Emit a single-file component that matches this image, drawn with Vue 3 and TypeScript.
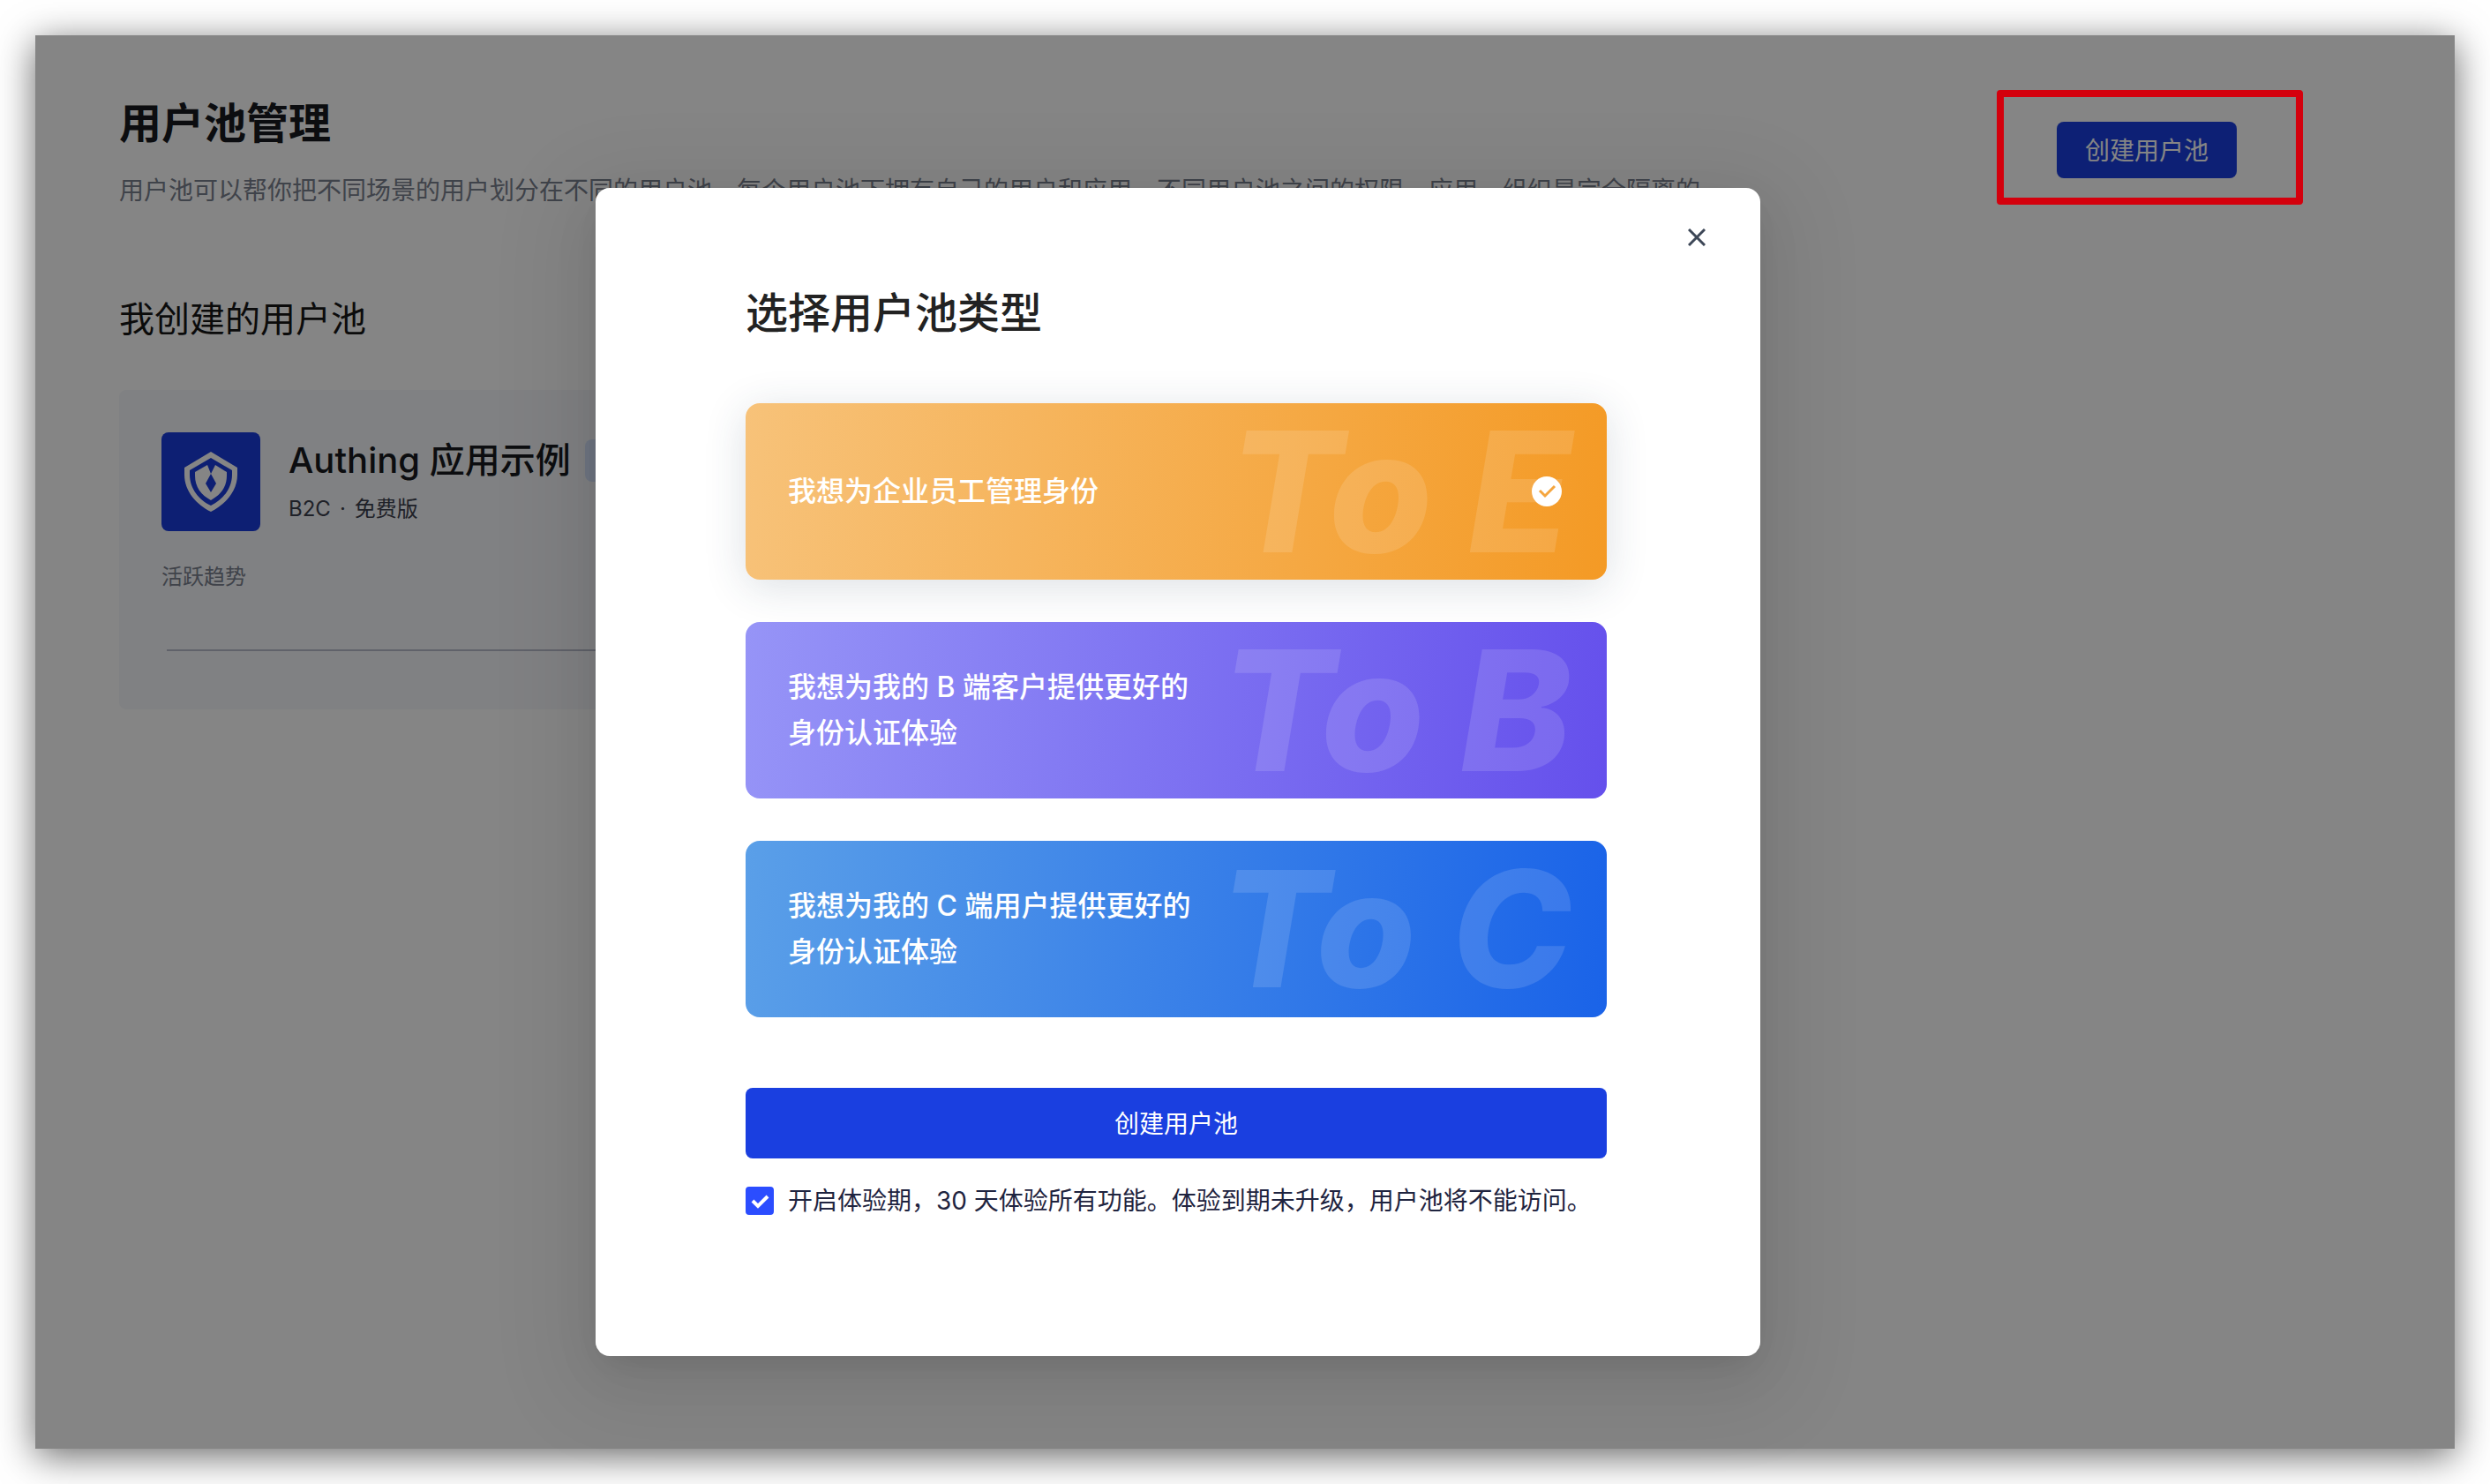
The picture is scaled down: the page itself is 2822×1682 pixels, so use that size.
<script setup lang="ts">
import { ref } from 'vue'

interface PoolType {
  id: string
  letter: string
  lines: string[]
}

const poolTypes: PoolType[] = [
  { id: 'e', letter: 'E', lines: ['我想为企业员工管理身份'] },
  { id: 'b', letter: 'B', lines: ['我想为我的 B 端客户提供更好的', '身份认证体验'] },
  { id: 'c', letter: 'C', lines: ['我想为我的 C 端用户提供更好的', '身份认证体验'] },
]

const selected = ref('e')
const trial = ref(true)
</script>

<template>
  <div class="page">
    <div class="frame">
      <main class="console">
        <header class="head">
          <div>
            <h1>用户池管理</h1>
            <p class="desc">用户池可以帮你把不同场景的用户划分在不同的用户池，每个用户池下拥有自己的用户和应用，不同用户池之间的权限、应用、组织是完全隔离的</p>
          </div>
          <button class="create" type="button">创建用户池</button>
        </header>
        <h2>我创建的用户池</h2>
        <article class="pool">
          <div class="pool-top">
            <div class="logo">
              <svg viewBox="0 0 60 68" width="60" height="68" aria-hidden="true">
                <path fill="#fff" fill-rule="evenodd" d="M30 0 60 18V26C60 45 46 60 30 68 14 60 0 45 0 26V18ZM30 7 6 21V26C6 42 17 55 30 61 43 55 54 42 54 26V21Z" />
                <path fill="#fff" d="M26 15 12 23V27C12 40 19 49 30 55 41 49 48 40 48 27V23L35 15 30 25 36 36 30 46 24 36 30 25Z" />
              </svg>
            </div>
            <div>
              <div class="pool-name"><h3>Authing 应用示例</h3><span class="tag">体验中</span></div>
              <p class="plan"><span>B2C</span><span>·</span><span>免费版</span></p>
            </div>
          </div>
          <p class="trend">活跃趋势</p>
          <div class="chart"></div>
        </article>
      </main>

      <div class="overlay">
        <section class="modal" role="dialog" aria-labelledby="modal-title">
          <button class="close" type="button" aria-label="关闭">
            <svg viewBox="0 0 20 20" width="20" height="20" aria-hidden="true">
              <path d="M1 1 19 19M19 1 1 19" stroke="#3d4757" stroke-width="3" fill="none" />
            </svg>
          </button>
          <h2 id="modal-title" class="modal-title">选择用户池类型</h2>
          <div class="types">
            <label v-for="t in poolTypes" :key="t.id" class="type" :class="[t.id, { active: selected === t.id }]">
              <input v-model="selected" class="radio" type="radio" name="pool" :value="t.id" />
              <span class="mark" aria-hidden="true"><span>To</span><span>{{ t.letter }}</span></span>
              <span class="type-body">
                <span class="type-text"><span v-for="l in t.lines" :key="l">{{ l }}</span></span>
                <svg v-if="selected === t.id" viewBox="0 0 40 40" width="40" height="40" aria-hidden="true">
                  <circle cx="20" cy="20" r="17" fill="#fff" />
                  <path d="M12 19 18 25 29 14" stroke="#f5a63f" stroke-width="3" fill="none" />
                </svg>
              </span>
            </label>
          </div>
          <button class="submit" type="button">创建用户池</button>
          <label class="trial">
            <span class="box">
              <input v-model="trial" type="checkbox" />
              <svg v-if="trial" viewBox="0 0 32 32" width="32" height="32" aria-hidden="true">
                <path d="M8 16 14 22 25 11" stroke="#fff" stroke-width="4" fill="none" />
              </svg>
            </span>
            <span>开启体验期，30 天体验所有功能。体验到期未升级，用户池将不能访问。</span>
          </label>
        </section>
      </div>
      <div class="highlight"></div>
    </div>
  </div>
</template>

<style>
body {
  margin: 0;
  background: #fff;
}
</style>

<style scoped>
* {
  box-sizing: border-box;
}

h1, h2, h3, p {
  margin: 0;
}

button {
  border: 0;
  padding: 0;
  font: inherit;
  cursor: pointer;
}

.page {
  display: flex;
  min-height: 100vh;
  padding: 40px;
  overflow: hidden;
  font-family: Inter, "Noto Sans CJK SC", sans-serif;
  font-size: 28px;
}

.frame {
  position: relative;
  display: grid;
  flex: 1;
  background: #fff;
  box-shadow: 0 8px 40px rgba(0, 0, 0, 0.6);
}

.console,
.overlay {
  grid-area: 1 / 1;
  padding: 64px 247px 64px 95px;
}

.head {
  display: flex;
  justify-content: space-between;
  align-items: flex-start;
}

h1 {
  font-size: 48px;
  line-height: 72px;
  font-weight: 700;
  color: #181a20;
}

.desc {
  margin-top: 18px;
  line-height: 44px;
  color: #7a808e;
}

.create,
.submit {
  padding-bottom: 2px;
  border-radius: 8px;
  background: #1a3fe0;
  color: #fff;
}

.create {
  width: 204px;
  height: 64px;
  margin-top: 34px;
}

h2 {
  margin-top: 94px;
  font-size: 40px;
  line-height: 60px;
  font-weight: 400;
  color: #161616;
}

.pool {
  width: 776px;
  margin-top: 50px;
  padding: 48px;
  height: 362px;
  border-radius: 8px;
  background: #f6f8fb;
}

.pool-top {
  display: flex;
  gap: 32px;
}

.logo {
  display: grid;
  place-items: center;
  width: 112px;
  height: 112px;
  border-radius: 8px;
  background: #1a3ddc;
}

.pool-name {
  display: flex;
  align-items: center;
  gap: 16px;
}

h3 {
  font-size: 40px;
  line-height: 64px;
  font-weight: 500;
  color: #181a20;
}

.tag {
  padding: 0 12px;
  border-radius: 8px;
  background: #d7e3fb;
  color: #1a3ddc;
  font-size: 24px;
  line-height: 48px;
}

.plan {
  display: flex;
  gap: 10px;
  font-size: 24px;
  line-height: 46px;
  color: #3c404d;
}

.trend {
  margin-top: 34px;
  font-size: 24px;
  line-height: 36px;
  color: #7a808e;
}

.chart {
  margin: 64px 6px 0;
  border-top: 2px solid #b8bdcb;
}

.overlay {
  display: grid;
  justify-items: center;
  align-items: start;
  padding-top: 173px;
  background: rgba(0, 0, 0, 0.48);
}

.modal {
  position: relative;
  width: 100%;
  max-width: 1320px;
  padding: 106px 174px 160px 170px;
  border-radius: 16px;
  background: #fff;
  box-shadow: 0 12px 32px -16px rgba(0, 0, 0, 0.12), 0 18px 56px rgba(0, 0, 0, 0.05), 0 24px 96px 32px rgba(0, 0, 0, 0.08);
}

.close {
  position: absolute;
  top: 36px;
  right: 52px;
  display: grid;
  place-items: center;
  width: 40px;
  height: 40px;
  background: none;
}

.modal-title {
  margin: 0;
  font-size: 48px;
  line-height: 72px;
  font-weight: 500;
  color: #222;
}

.types {
  display: grid;
  gap: 48px;
  margin-top: 66px;
}

.type {
  display: grid;
  align-items: center;
  height: 200px;
  border-radius: 16px;
  color: #fff;
  cursor: pointer;
}

.type.active {
  box-shadow: 0 8px 48px rgba(40, 60, 90, 0.16);
}

.type.e {
  background: linear-gradient(96deg, #f7c279, #f49a25);
}

.type.b {
  background: linear-gradient(96deg, #9694f7, #6550ec);
}

.type.c {
  background: linear-gradient(96deg, #5a9fe8, #1a63e8);
}

.radio,
.mark,
.type-body {
  grid-area: 1 / 1;
}

.radio {
  opacity: 0;
  width: 1px;
  height: 1px;
  margin: 0;
}

.mark {
  display: flex;
  gap: 40px;
  justify-self: end;
  padding-right: 40px;
  font-size: 190px;
  line-height: 200px;
  font-weight: 800;
  font-style: italic;
  color: rgba(255, 255, 255, 0.13);
}

.c .mark {
  font-size: 183px;
}

.type-body {
  display: flex;
  align-items: center;
  justify-content: space-between;
  padding: 0 48px;
}

.type-text {
  display: grid;
  font-size: 32px;
  line-height: 52px;
  font-weight: 500;
}

.submit {
  display: block;
  width: 100%;
  height: 80px;
  margin-top: 80px;
}

.trial {
  display: flex;
  gap: 16px;
  margin-top: 32px;
  line-height: 32px;
  color: #1f2440;
  white-space: nowrap;
  cursor: pointer;
}

.box {
  display: grid;
}

.box > * {
  grid-area: 1 / 1;
}

.box input {
  appearance: none;
  width: 32px;
  height: 32px;
  margin: 0;
  border-radius: 4px;
  border: 2px solid #2b4dff;
}

.box input:checked {
  background: #2b4dff;
}

.box svg {
  pointer-events: none;
}

.highlight {
  position: absolute;
  top: 62px;
  right: 172px;
  width: 347px;
  height: 130px;
  border: 8px solid #d4000d;
  border-radius: 4px;
  pointer-events: none;
}
</style>
